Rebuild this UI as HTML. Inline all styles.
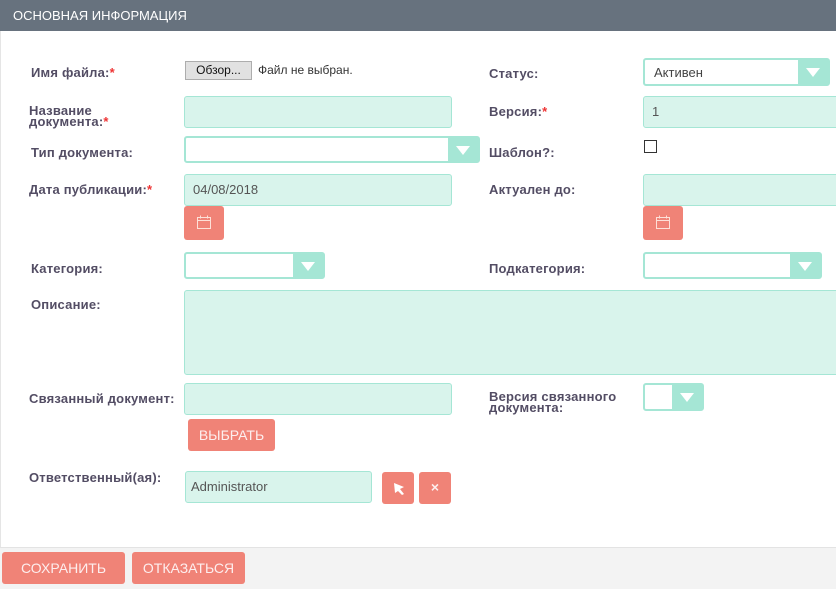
<!DOCTYPE html>
<html><head><meta charset="utf-8"><style>
*{box-sizing:border-box;margin:0;padding:0}
body{width:836px;height:589px;overflow:hidden;background:#fff;font-family:"Liberation Sans",sans-serif;position:relative}
.a{position:absolute}
.hd{left:0;top:0;width:836px;height:31px;background:#67727e;color:#fff;font-size:13px;line-height:31px;padding-left:13px}
.lb{font-size:13px;font-weight:bold;color:#534d64;line-height:13px;letter-spacing:0.2px}
.st{color:#e33}
.in{background:#d9f4ec;border:1px solid #a5e6d5;border-radius:3px;font-size:13px;color:#555;padding-left:8px}
.sel{border:2px solid #a5e6d5;border-radius:3px;background:#fff}
.sel .ar{position:absolute;right:0;top:0;bottom:0;width:30px;background:#a5e6d5}
.sel .ar:after{content:"";position:absolute;left:8px;top:8px;border-left:7px solid transparent;border-right:7px solid transparent;border-top:9px solid #fff}
.bt{background:#f08377;border-radius:3px;color:#fdeeee;font-size:13px;text-align:center}
</style></head><body>
<div class="a hd">ОСНОВНАЯ ИНФОРМАЦИЯ</div>
<div class="a" style="left:0;top:31px;width:1px;height:517px;background:#e5e5e5"></div>
<div class="a" style="left:0;top:547px;width:836px;height:42px;background:#f3f3f3;border-top:1px solid #e3e3e3"></div>

<div class="a lb" style="left:31px;top:66px">Имя файла:<span class="st">*</span></div>
<div class="a" style="left:185px;top:61px;width:67px;height:19px;background:#e1e1e1;border:1px solid #adadad;font-size:12px;text-align:center;line-height:17px;color:#111">Обзор...</div>
<div class="a" style="left:258px;top:63px;font-size:12px;color:#333">Файл не выбран.</div>

<div class="a lb" style="left:29px;top:105px;line-height:11px">Название<br>документа:<span class="st">*</span></div>
<div class="a in" style="left:184px;top:96px;width:268px;height:32px"></div>

<div class="a lb" style="left:31px;top:146px">Тип документа:</div>
<div class="a sel" style="left:184px;top:136px;width:296px;height:27px"><div class="ar"></div></div>

<div class="a lb" style="left:29px;top:183px">Дата публикации:<span class="st">*</span></div>
<div class="a in" style="left:184px;top:174px;width:268px;height:32px;line-height:30px">04/08/2018</div>
<div class="a bt" style="left:184px;top:206px;width:40px;height:34px"><svg width="40" height="34"><path d="M13.5 11.5h13v11h-13zM13.5 14.5h13M16.5 9.5v3M23.5 9.5v3" stroke="#fde0d8" fill="none"/></svg></div>

<div class="a lb" style="left:31px;top:262px">Категория:</div>
<div class="a sel" style="left:184px;top:252px;width:141px;height:27px"><div class="ar"></div></div>

<div class="a lb" style="left:31px;top:298px">Описание:</div>
<div class="a in" style="left:184px;top:290px;width:660px;height:85px"></div>

<div class="a lb" style="left:29px;top:392px">Связанный документ:</div>
<div class="a in" style="left:184px;top:383px;width:268px;height:32px"></div>
<div class="a bt" style="left:188px;top:419px;width:87px;height:32px;line-height:32px;font-size:14px">ВЫБРАТЬ</div>

<div class="a lb" style="left:29px;top:471px">Ответственный(ая):</div>
<div class="a in" style="left:185px;top:471px;width:187px;height:32px;line-height:30px;padding-left:5px">Administrator</div>
<div class="a bt" style="left:382px;top:472px;width:32px;height:32px"><svg width="32" height="32"><path d="M12 11 L22 15 L18 17 L22 22 L20 23 L16 19 L13 21 Z" fill="#fff"/></svg></div>
<div class="a bt" style="left:419px;top:472px;width:32px;height:32px;line-height:31px;font-weight:bold;font-size:14px">×</div>

<div class="a lb" style="left:489px;top:67px">Статус:</div>
<div class="a sel" style="left:643px;top:58px;width:187px;height:28px"><div class="ar"></div><span style="position:absolute;left:9px;top:5px;font-size:13px;color:#444">Активен</span></div>

<div class="a lb" style="left:489px;top:105px">Версия:<span class="st">*</span></div>
<div class="a in" style="left:643px;top:96px;width:200px;height:32px;line-height:30px">1</div>

<div class="a lb" style="left:489px;top:146px">Шаблон?:</div>
<div class="a" style="left:644px;top:140px;width:13px;height:13px;border:1px solid #333;background:#fff"></div>

<div class="a lb" style="left:489px;top:183px">Актуален до:</div>
<div class="a in" style="left:643px;top:174px;width:200px;height:32px"></div>
<div class="a bt" style="left:643px;top:206px;width:40px;height:34px"><svg width="40" height="34"><path d="M13.5 11.5h13v11h-13zM13.5 14.5h13M16.5 9.5v3M23.5 9.5v3" stroke="#fde0d8" fill="none"/></svg></div>

<div class="a lb" style="left:489px;top:262px">Подкатегория:</div>
<div class="a sel" style="left:643px;top:252px;width:179px;height:27px"><div class="ar"></div></div>

<div class="a lb" style="left:489px;top:391px;line-height:11px">Версия связанного<br>документа:</div>
<div class="a sel" style="left:643px;top:383px;width:61px;height:28px"><div class="ar"></div></div>

<div class="a bt" style="left:2px;top:552px;width:123px;height:32px;line-height:32px;font-size:14px">СОХРАНИТЬ</div>
<div class="a bt" style="left:132px;top:552px;width:113px;height:32px;line-height:32px;font-size:14px">ОТКАЗАТЬСЯ</div>
</body></html>
